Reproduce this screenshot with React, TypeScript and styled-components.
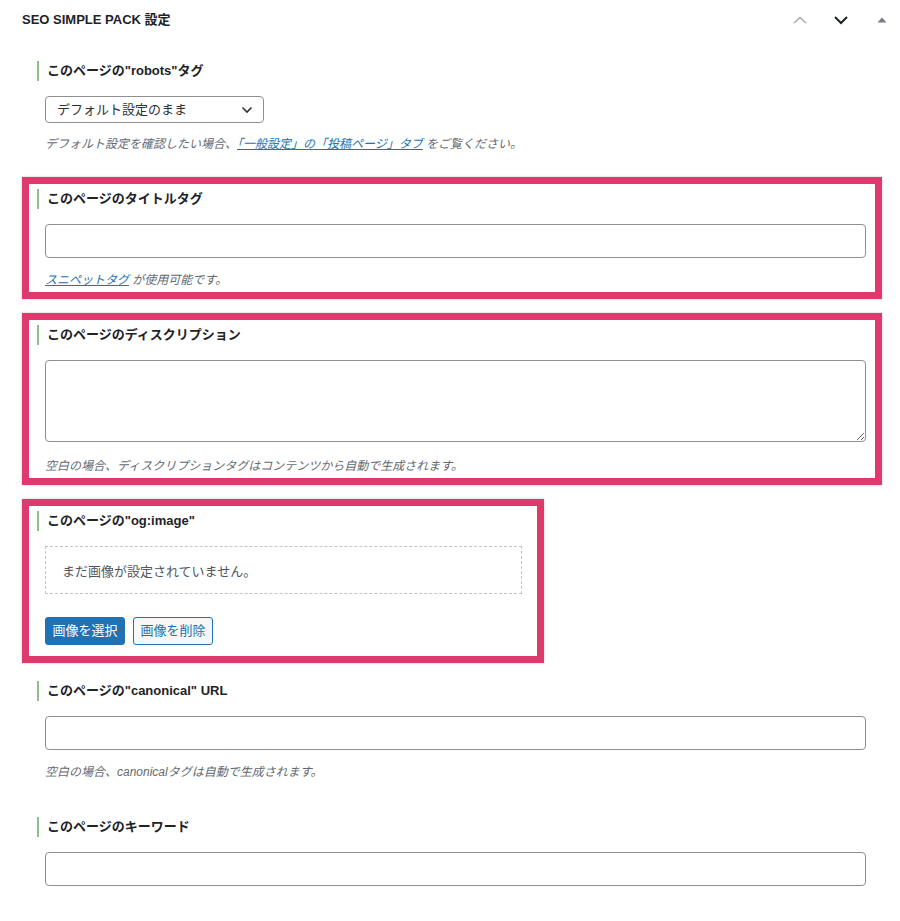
import styled, { createGlobalStyle } from "styled-components";

const GlobalStyle = createGlobalStyle`
  body {
    margin: 0;
    background: #fff;
    font-family: "Liberation Sans", "Noto Sans CJK JP", sans-serif;
    color: #1d2327;
  }
  * { box-sizing: border-box; }
`;

const UpIcon = () => (
  <svg width="16" height="10" viewBox="0 0 16 10">
    <path d="M2 8 L8 2.5 L14 8" fill="none" stroke="#a7aaad" strokeWidth="1.6" />
  </svg>
);

const DownIcon = () => (
  <svg width="16" height="10" viewBox="0 0 16 10">
    <path d="M2 2 L8 8 L14 2" fill="none" stroke="#1d2327" strokeWidth="2" />
  </svg>
);

const ToggleIcon = () => (
  <svg width="10" height="6" viewBox="0 0 10 6">
    <path d="M0.5 5.5 L5 0.5 L9.5 5.5 Z" fill="#787c82" />
  </svg>
);

const SelectChevron = () => (
  <svg width="12" height="8" viewBox="0 0 12 8">
    <path d="M1.5 1.5 L6 6 L10.5 1.5" fill="none" stroke="#2c3338" strokeWidth="1.6" />
  </svg>
);

export default function App() {
  return (
    <>
      <GlobalStyle />
      <Panel>
        <Header>
          <Title>SEO SIMPLE PACK 設定</Title>
          <HeaderActions>
            <HandleButton><UpIcon /></HandleButton>
            <HandleButton><DownIcon /></HandleButton>
            <HandleButton><ToggleIcon /></HandleButton>
          </HeaderActions>
        </Header>

        <Fields>
          <Field>
            <Label>このページの"robots"タグ</Label>
            <SelectWrap>
              <Select defaultValue="default">
                <option value="default">デフォルト設定のまま</option>
              </Select>
              <ChevronSlot><SelectChevron /></ChevronSlot>
            </SelectWrap>
            <Description $tight>
              デフォルト設定を確認したい場合、<Link href="#">「一般設定」の「投稿ページ」タブ</Link> をご覧ください。
            </Description>
          </Field>

          <Field $highlight>
            <Label>このページのタイトルタグ</Label>
            <TextInput type="text" />
            <Description>
              <Link href="#">スニペットタグ</Link> が使用可能です。
            </Description>
          </Field>

          <Field $highlight>
            <Label>このページのディスクリプション</Label>
            <TextArea />
            <Description $loose>空白の場合、ディスクリプションタグはコンテンツから自動で生成されます。</Description>
          </Field>

          <Field $highlight $fit $tail>
            <Label>このページの"og:image"</Label>
            <ImagePreview>まだ画像が設定されていません。</ImagePreview>
            <ButtonRow>
              <PrimaryButton>画像を選択</PrimaryButton>
              <SecondaryButton>画像を削除</SecondaryButton>
            </ButtonRow>
          </Field>

          <Field>
            <Label>このページの"canonical" URL</Label>
            <TextInput type="text" />
            <Description>空白の場合、canonicalタグは自動で生成されます。</Description>
          </Field>

          <Field>
            <Label>このページのキーワード</Label>
            <TextInput type="text" />
          </Field>
        </Fields>
      </Panel>
    </>
  );
}

const Panel = styled.div`
  width: 900px;
  min-height: 921px;
  background: #fff;
`;

const Header = styled.div`
  display: flex;
  align-items: center;
  justify-content: space-between;
  height: 40px;
  padding-left: 22px;
`;

const Title = styled.h2`
  margin: 0;
  font-size: 13px;
  font-weight: 700;
  line-height: 20px;
  color: #1d2327;
`;

const HeaderActions = styled.div`
  display: flex;
  gap: 5px;
`;

const HandleButton = styled.button`
  width: 36px;
  height: 36px;
  display: flex;
  align-items: center;
  justify-content: center;
  padding: 0;
  border: none;
  background: none;
`;

const Fields = styled.div`
  display: flex;
  flex-direction: column;
  gap: 14px;
  padding: 9px 18px 0 22px;
`;

const Field = styled.div<{ $highlight?: boolean; $fit?: boolean; $tail?: boolean }>`
  display: flex;
  flex-direction: column;
  align-self: ${({ $fit }) => ($fit ? "flex-start" : "stretch")};
  border: 7px solid ${({ $highlight }) => ($highlight ? "#df3a6e" : "transparent")};
  box-shadow: ${({ $highlight }) => ($highlight ? "0 0 2px rgba(0, 0, 0, 0.25)" : "none")};
  padding: 5px ${({ $fit }) => ($fit ? "15px" : "9px")} ${({ $tail }) => ($tail ? "11px" : "3px")} 16px;
  margin-bottom: ${({ $tail }) => ($tail ? "-8px" : "0")};
`;

const Label = styled.div`
  margin-left: -8px;
  padding-left: 8px;
  border-left: 2px solid #8dbf8d;
  font-size: 13px;
  font-weight: 700;
  line-height: 20px;
  color: #1d2327;
`;

const SelectWrap = styled.div`
  position: relative;
  width: 219px;
  margin-top: 15px;
`;

const Select = styled.select`
  display: block;
  width: 100%;
  height: 27px;
  padding: 0 28px 0 11px;
  border: 1px solid #8c8f94;
  border-radius: 4px;
  background: #fff;
  appearance: none;
  font-family: "Liberation Sans", "Noto Sans CJK JP", sans-serif;
  font-size: 13px;
  color: #2c3338;
`;

const ChevronSlot = styled.span`
  position: absolute;
  right: 11px;
  top: 10px;
  display: flex;
  pointer-events: none;
`;

const TextInput = styled.input`
  display: block;
  width: 100%;
  height: 34px;
  margin-top: 15px;
  padding: 0 8px;
  border: 1px solid #8c8f94;
  border-radius: 4px;
  background: #fff;
  font-size: 13px;
`;

const TextArea = styled.textarea`
  display: block;
  width: 100%;
  height: 82px;
  margin-top: 15px;
  padding: 6px 8px;
  border: 1px solid #8c8f94;
  border-radius: 4px;
  background: #fff;
  resize: vertical;
  font-size: 13px;
`;

const Description = styled.p<{ $tight?: boolean; $loose?: boolean }>`
  margin: ${({ $tight, $loose }) => ($tight ? "12px" : $loose ? "15px" : "13px")} 0 0;
  font-size: 12px;
  line-height: 18px;
  font-style: italic;
  color: #646970;
`;

const Link = styled.a`
  color: #2271b1;
  text-decoration: underline;
`;

const ImagePreview = styled.div`
  width: 477px;
  height: 48px;
  margin-top: 15px;
  padding: 0 16px;
  display: flex;
  align-items: center;
  border: 1px dashed #c3c4c7;
  font-size: 13px;
  color: #50575e;
`;

const ButtonRow = styled.div`
  display: flex;
  gap: 8px;
  margin-top: 23px;
`;

const BaseButton = styled.button`
  width: 80px;
  height: 28px;
  padding: 0;
  border-radius: 3px;
  font-family: "Liberation Sans", "Noto Sans CJK JP", sans-serif;
  font-size: 13px;
  line-height: 26px;
`;

const PrimaryButton = styled(BaseButton)`
  border: 1px solid #2271b1;
  background: #2271b1;
  color: #fff;
`;

const SecondaryButton = styled(BaseButton)`
  border: 1px solid #2271b1;
  background: #f6f7f7;
  color: #2271b1;
`;
